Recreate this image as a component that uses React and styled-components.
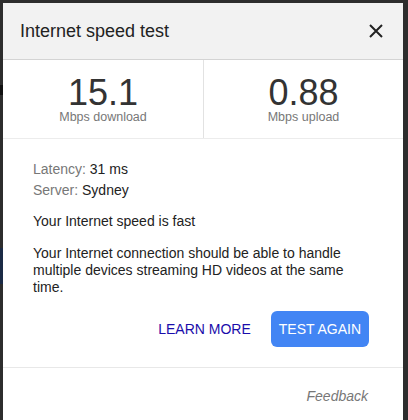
import React from "react";
import styled, { createGlobalStyle } from "styled-components";

const Global = createGlobalStyle`
  html, body { margin: 0; padding: 0; }
  body {
    background:
      linear-gradient(to bottom, transparent 85px, #111 85px, #111 95px, transparent 95px, transparent 248px, #1b2a45 248px, #1b2a45 284px, transparent 284px) left top / 3px 100% no-repeat,
      #2d2d2d;
    font-family: "Liberation Sans", Arial, sans-serif;
    height: 420px;
    overflow: hidden;
  }
`;

const Page = styled.div`
  padding: 3px 5px 0 3px;
`;

const Dialog = styled.div`
  width: 400px;
  background: #fff;
  height: 417px;
`;

const Header = styled.div`
  height: 56px;
  background: #f2f2f2;
  border-bottom: 1px solid #d4d4d4;
  display: flex;
  align-items: center;
  justify-content: space-between;
  padding: 0 19px 0 17px;
`;

const Title = styled.h1`
  margin: 0;
  font-size: 18px;
  font-weight: normal;
  color: #222;
  line-height: 24px;
`;

const CloseButton = styled.button`
  border: 0;
  background: none;
  padding: 0;
  width: 16px;
  height: 16px;
  display: flex;
  align-items: center;
  justify-content: center;
  cursor: pointer;
`;

const Stats = styled.div`
  display: grid;
  grid-template-columns: 200px 1fr;
  border-bottom: 1px solid #ececec;
`;

const Stat = styled.div`
  display: flex;
  flex-direction: column;
  align-items: center;
  padding: 15px 0 14px;
  border-left: ${(p) => (p.$divider ? "1px solid #e2e2e2" : "0")};
`;

const Value = styled.div`
  font-size: 36px;
  line-height: 35px;
  color: #333;
`;

const Unit = styled.div`
  font-size: 12.5px;
  line-height: 14px;
  color: #777;
`;

const Body = styled.div`
  padding: 20px 30px 20px 30px;
  border-bottom: 1px solid #e8e8e8;
`;

const InfoLine = styled.div`
  font-size: 14px;
  line-height: 21px;
  color: #222;
`;

const Label = styled.span`
  color: #777;
`;

const Text = styled.p`
  margin: ${(p) => p.$mt}px 0 0;
  font-size: 14px;
  line-height: 17px;
  color: #222;
`;

const Actions = styled.div`
  display: flex;
  justify-content: flex-end;
  gap: 14px;
  margin-top: 15px;
  padding-right: 4px;
`;

const Button = styled.button`
  height: 36px;
  padding: 0 ${(p) => (p.$primary ? 8 : 6)}px;
  border: 0;
  border-radius: 6px;
  font-family: "Liberation Sans", Arial, sans-serif;
  font-size: 14px;
  text-transform: uppercase;
  cursor: pointer;
  background: ${(p) => (p.$primary ? "#4285f4" : "transparent")};
  color: ${(p) => (p.$primary ? "#fff" : "#1a0dab")};
`;

const Footer = styled.div`
  display: flex;
  justify-content: flex-end;
  padding: 20px 35px 0 0;
`;

const Feedback = styled.a`
  font-size: 14px;
  line-height: 17px;
  font-style: italic;
  color: #777;
  text-decoration: none;
`;

export default function App() {
  return (
    <>
      <Global />
      <Page>
        <Dialog>
          <Header>
            <Title>Internet speed test</Title>
            <CloseButton aria-label="Close">
              <svg width="14" height="14" viewBox="0 0 14 14">
                <path d="M1 1L13 13M13 1L1 13" stroke="#222" strokeWidth="2" />
              </svg>
            </CloseButton>
          </Header>
          <Stats>
            <Stat>
              <Value>15.1</Value>
              <Unit>Mbps download</Unit>
            </Stat>
            <Stat $divider>
              <Value>0.88</Value>
              <Unit>Mbps upload</Unit>
            </Stat>
          </Stats>
          <Body>
            <InfoLine>
              <Label>Latency:</Label> 31 ms
            </InfoLine>
            <InfoLine>
              <Label>Server:</Label> Sydney
            </InfoLine>
            <Text $mt={12}>Your Internet speed is fast</Text>
            <Text $mt={15}>
              Your Internet connection should be able to handle multiple devices
              streaming HD videos at the same time.
            </Text>
            <Actions>
              <Button>Learn more</Button>
              <Button $primary>Test again</Button>
            </Actions>
          </Body>
          <Footer>
            <Feedback href="#">Feedback</Feedback>
          </Footer>
        </Dialog>
      </Page>
    </>
  );
}
